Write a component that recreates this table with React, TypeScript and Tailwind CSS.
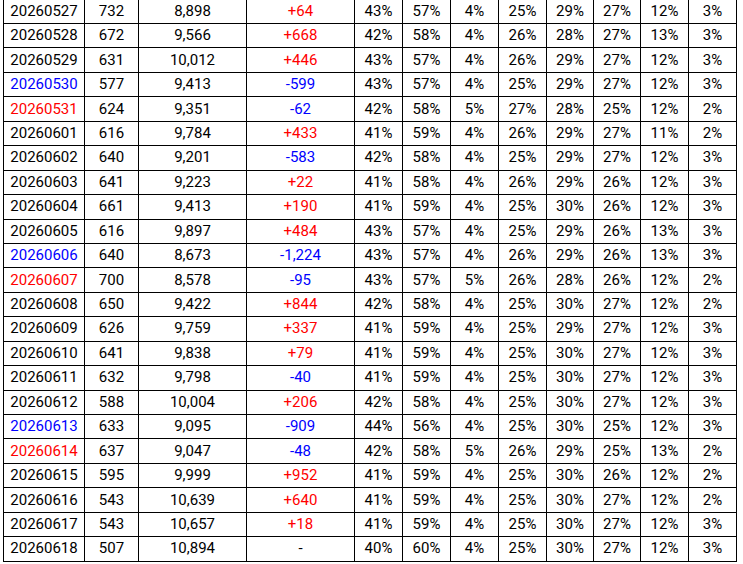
const ROWS: string[][] = [
  ["20260527", "732", "8,898", "+64", "43%", "57%", "4%", "25%", "29%", "27%", "12%", "3%"],
  ["20260528", "672", "9,566", "+668", "42%", "58%", "4%", "26%", "28%", "27%", "13%", "3%"],
  ["20260529", "631", "10,012", "+446", "43%", "57%", "4%", "26%", "29%", "27%", "12%", "3%"],
  ["20260530", "577", "9,413", "-599", "43%", "57%", "4%", "25%", "29%", "27%", "12%", "3%"],
  ["20260531", "624", "9,351", "-62", "42%", "58%", "5%", "27%", "28%", "25%", "12%", "2%"],
  ["20260601", "616", "9,784", "+433", "41%", "59%", "4%", "26%", "29%", "27%", "11%", "2%"],
  ["20260602", "640", "9,201", "-583", "42%", "58%", "4%", "25%", "29%", "27%", "12%", "3%"],
  ["20260603", "641", "9,223", "+22", "41%", "58%", "4%", "26%", "29%", "26%", "12%", "3%"],
  ["20260604", "661", "9,413", "+190", "41%", "59%", "4%", "25%", "30%", "26%", "12%", "3%"],
  ["20260605", "616", "9,897", "+484", "43%", "57%", "4%", "25%", "29%", "26%", "13%", "3%"],
  ["20260606", "640", "8,673", "-1,224", "43%", "57%", "4%", "26%", "29%", "26%", "13%", "3%"],
  ["20260607", "700", "8,578", "-95", "43%", "57%", "5%", "26%", "28%", "26%", "12%", "2%"],
  ["20260608", "650", "9,422", "+844", "42%", "58%", "4%", "25%", "30%", "27%", "12%", "2%"],
  ["20260609", "626", "9,759", "+337", "41%", "59%", "4%", "25%", "29%", "27%", "12%", "3%"],
  ["20260610", "641", "9,838", "+79", "41%", "59%", "4%", "25%", "30%", "27%", "12%", "3%"],
  ["20260611", "632", "9,798", "-40", "41%", "59%", "4%", "25%", "30%", "27%", "12%", "3%"],
  ["20260612", "588", "10,004", "+206", "42%", "58%", "4%", "25%", "30%", "27%", "12%", "3%"],
  ["20260613", "633", "9,095", "-909", "44%", "56%", "4%", "25%", "30%", "25%", "12%", "3%"],
  ["20260614", "637", "9,047", "-48", "42%", "58%", "5%", "26%", "29%", "25%", "13%", "2%"],
  ["20260615", "595", "9,999", "+952", "41%", "59%", "4%", "25%", "30%", "26%", "12%", "2%"],
  ["20260616", "543", "10,639", "+640", "41%", "59%", "4%", "25%", "30%", "27%", "12%", "2%"],
  ["20260617", "543", "10,657", "+18", "41%", "59%", "4%", "25%", "30%", "27%", "12%", "3%"],
  ["20260618", "507", "10,894", "-", "40%", "60%", "4%", "25%", "30%", "27%", "12%", "3%"],
];

const WIDTHS = [81, 54, 108, 108, 48, 48, 48, 48, 47, 47, 48, 48];

// saturdays blue, sundays red
const SAT = ["20260530", "20260606", "20260613"];
const SUN = ["20260531", "20260607", "20260614"];

function dateColor(d: string) {
  if (SAT.includes(d)) return "text-[#0000ff]";
  if (SUN.includes(d)) return "text-[#ff0000]";
  return "text-black";
}

function diffColor(v: string) {
  if (v.startsWith("+")) return "text-[#ff0000]";
  if (v.startsWith("-") && v.length > 1) return "text-[#0000ff]";
  return "text-black";
}

export default function App() {
  return (
    <div className="w-[743px] h-[564px] overflow-hidden bg-white">
      <div className="ml-[3px] -mt-[1.45px]">
        <table
          className="table-fixed border-collapse text-center text-[15px] leading-none text-black"
          style={{ fontFamily: "Roboto, 'Noto Sans', sans-serif" }}
        >
          <colgroup>
            {WIDTHS.map((w, i) => (
              <col key={i} style={{ width: w }} />
            ))}
          </colgroup>
          <tbody>
            {ROWS.map((r) => (
              <tr key={r[0]} className="h-[24.45px]">
                {r.map((c, j) => {
                  let color = "";
                  if (j === 0) color = dateColor(c);
                  if (j === 3) color = diffColor(c);
                  return (
                    <td key={j} className={`border border-black p-0 align-middle ${color}`}>
                      {c}
                    </td>
                  );
                })}
              </tr>
            ))}
          </tbody>
        </table>
      </div>
    </div>
  );
}
